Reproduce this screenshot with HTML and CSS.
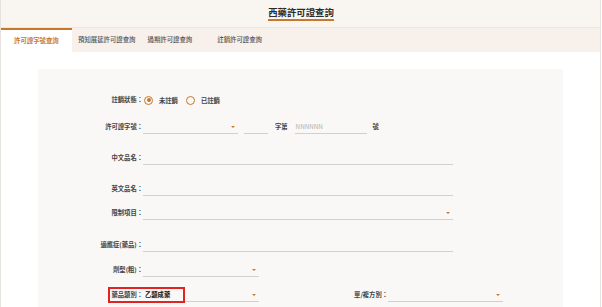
FILE: index.html
```html
<!DOCTYPE html>
<html lang="zh-Hant">
<head>
<meta charset="utf-8">
<title>西藥許可證查詢</title>
<link rel="stylesheet" href="styles.css">
</head>
<body>
<div class="page">
  <header class="header">
    <span class="title">西藥許可證查詢</span>
  </header>
  <nav class="tabs">
    <div class="tab tab-active">許可證字號查詢</div>
    <div class="tab tab-2">預知展延許可證查詢</div>
    <div class="tab tab-3">過期許可證查詢</div>
    <div class="tab tab-4">註銷許可證查詢</div>
  </nav>
  <main class="content">
    <section class="panel">
      <div class="row row-first">
        <span class="label">註銷狀態：</span>
        <span class="radio radio-on"></span><span class="radio-text">未註銷</span>
        <span class="radio radio-off"></span><span class="radio-text">已註銷</span>
      </div>
      <div class="row gap-13">
        <span class="label">許可證字號：</span>
        <span class="field select w-95"><span class="arrow"></span></span>
        <span class="field w-24 ml-6"></span>
        <span class="word ml-7">字第</span>
        <span class="field w-72 ml-7 placeholder">NNNNNN</span>
        <span class="word ml-6">號</span>
      </div>
      <div class="row gap-17">
        <span class="label">中文品名：</span>
        <span class="field w-310"></span>
      </div>
      <div class="row gap-17">
        <span class="label">英文品名：</span>
        <span class="field w-310"></span>
      </div>
      <div class="row gap-10">
        <span class="label">限制項目：</span>
        <span class="field select w-310"><span class="arrow"></span></span>
      </div>
      <div class="row gap-18">
        <span class="label">適應症(藥品)：</span>
        <span class="field w-310"></span>
      </div>
      <div class="row gap-11">
        <span class="label">劑型(粗)：</span>
        <span class="field select w-116"><span class="arrow"></span></span>
      </div>
      <div class="row gap-11 row-mark">
        <span class="label">藥品類別：</span>
        <span class="field select w-116 value">乙類成藥<span class="arrow"></span></span>
        <span class="label label-second">單/複方別：</span>
        <span class="field select w-115"><span class="arrow"></span></span>
        <span class="highlight"></span>
      </div>
    </section>
  </main>
</div>
</body>
</html>
```
FILE: styles.css
```css
html, body {
  margin: 0;
  padding: 0;
  background: #ffffff;
}
body {
  font-family: "Noto Sans CJK TC", "Noto Sans", sans-serif;
  color: #3a3a3a;
}
.page {
  width: 599px;
  height: 307px;
  border-left: 1px solid #e6e3df;
  border-right: 1px solid #e6e3df;
  overflow: hidden;
}
.header {
  height: 27px;
  background: #f9f6f2;
  border-bottom: 1px solid #ece7e1;
  display: flex;
  justify-content: center;
  align-items: center;
}
.title {
  font-size: 9.4px;
  line-height: 12px;
  font-weight: 700;
  color: #2b2b2b;
  border-bottom: 2px solid #c8782d;
  padding-bottom: 1px;
  margin-left: 1px;
}
.tabs {
  height: 24px;
  background: #f8f0ea;
  display: flex;
}
.tab {
  font-size: 6.4px;
  line-height: 24px;
  color: #555;
  font-weight: 500;
  padding: 0 6px;
}
.tab-active {
  width: 45px;
  padding: 0 13px;
  background: #ffffff;
  color: #c8782d;
  font-weight: 700;
  border-top: 2px solid #c8782d;
  line-height: 22px;
}
.tab-4 {
  margin-left: 13px;
}
.content {
  padding: 17px 0 0 37px;
}
.panel {
  width: 525px;
  height: 240px;
  background: #f9f8f6;
  padding-top: 24px;
  box-sizing: border-box;
}
.row {
  height: 14px;
  display: flex;
  align-items: center;
  position: relative;
}
.gap-10 { margin-top: 10px; }
.gap-11 { margin-top: 11px; }
.gap-13 { margin-top: 13px; }
.gap-17 { margin-top: 17px; }
.gap-18 { margin-top: 18px; }
.label {
  width: 105px;
  text-align: right;
  font-size: 6.3px;
  line-height: 14px;
  font-weight: 600;
  color: #444;
  white-space: nowrap;
  flex: none;
}
.label-second {
  margin-left: 24px;
}
.word {
  font-size: 6.3px;
  line-height: 14px;
  font-weight: 600;
  color: #444;
}
.radio {
  width: 7px;
  height: 7px;
  border: 1px solid #c8782d;
  border-radius: 50%;
  margin-left: 1px;
  position: relative;
  flex: none;
}
.radio-on::after {
  content: "";
  position: absolute;
  left: 1.5px;
  top: 1.5px;
  width: 4px;
  height: 4px;
  border-radius: 50%;
  background: #c8782d;
}
.radio-off {
  margin-left: 8px;
}
.radio-text {
  font-size: 6.3px;
  font-weight: 600;
  margin-left: 6px;
  color: #444;
}
.field {
  height: 14px;
  box-sizing: border-box;
  border-bottom: 1px solid #d2d0cd;
  position: relative;
  flex: none;
  font-size: 6.3px;
  line-height: 13px;
}
.value {
  color: #111;
  font-weight: 700;
  padding-left: 2px;
}
.placeholder {
  color: #b0b0b0;
  padding-left: 1px;
}
.arrow {
  position: absolute;
  right: 3px;
  top: 6px;
  width: 0;
  height: 0;
  border-left: 2px solid transparent;
  border-right: 2px solid transparent;
  border-top: 2.5px solid #c8782d;
}
.w-24 { width: 24px; }
.w-72 { width: 72px; }
.w-95 { width: 95px; }
.w-115 { width: 115px; }
.w-116 { width: 116px; }
.w-310 { width: 310px; }
.ml-6 { margin-left: 6px; }
.ml-7 { margin-left: 7px; }
.highlight {
  position: absolute;
  left: 70px;
  top: -1px;
  width: 77px;
  height: 16px;
  box-sizing: border-box;
  border: 2px solid #e02424;
}
```
